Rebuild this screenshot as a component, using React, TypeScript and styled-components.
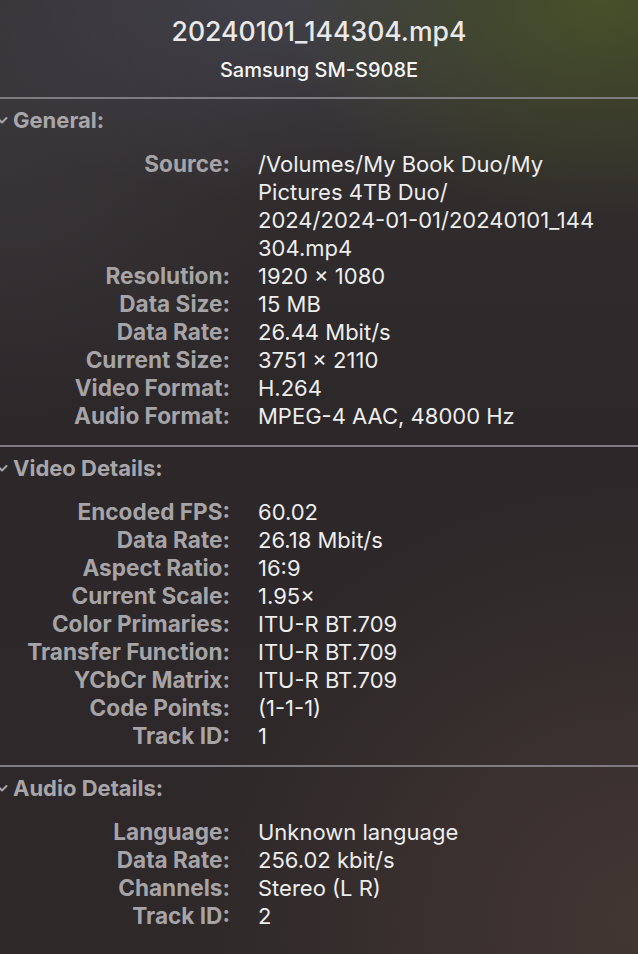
import { Fragment } from 'react';
import styled, { createGlobalStyle } from 'styled-components';

const GlobalStyle = createGlobalStyle`
  html, body {
    margin: 0;
    padding: 0;
    background: #2f2a2c;
  }
  body {
    font-family: Inter, "Liberation Sans", sans-serif;
    -webkit-font-smoothing: antialiased;
  }
`;

const Panel = styled.div`
  width: 638px;
  height: 954px;
  overflow: hidden;
  /* translucent inspector window over a blurry desktop */
  background:
    radial-gradient(ellipse 320px 220px at 600px 0px, rgba(74, 86, 40, 0.85) 0%, transparent 100%),
    radial-gradient(ellipse 360px 200px at 280px 0px, rgba(70, 70, 84, 0.7) 0%, transparent 100%),
    radial-gradient(ellipse 460px 440px at 640px 920px, rgba(78, 62, 56, 0.65) 0%, transparent 100%),
    radial-gradient(ellipse 300px 300px at 0px 120px, rgba(62, 60, 66, 0.6) 0%, transparent 100%),
    linear-gradient(180deg, #34302f 0%, #2c2729 45%, #2e2829 100%);
`;

const Header = styled.div`
  display: flex;
  flex-direction: column;
  align-items: center;
  padding: 16px 0 15px;
`;

const Title = styled.div`
  font-size: 26.6px;
  font-weight: 500;
  line-height: 30px;
  color: #e9e9ea;
`;

const Subtitle = styled.div`
  margin-top: 12px;
  font-size: 20px;
  font-weight: 500;
  line-height: 24px;
  color: #f6f6f6;
`;

const Divider = styled.div`
  height: 2px;
  background: #7e7c80;
`;

const Section = styled.section`
  padding: 7px 0 15px;
`;

const SectionHeader = styled.div`
  display: flex;
  align-items: center;
  gap: 4px;
  height: 28px;
  font-size: 22px;
  font-weight: 700;
  color: #a8a6a9;
`;

const Chevron = styled.svg`
  width: 14px;
  height: 14px;
  margin-left: -5px;
  flex: none;
`;

const Rows = styled.div`
  display: grid;
  grid-template-columns: 230px 340px;
  column-gap: 28px;
  margin-top: 16px;
  font-size: 22px;
  line-height: 28px;
`;

const Label = styled.div`
  text-align: right;
  font-weight: 700;
  font-size: 22.6px;
  color: #a6a4a7;
  white-space: nowrap;
`;

const Value = styled.div`
  color: #ededee;
  font-weight: 400;
  white-space: nowrap;
`;

const PathValue = styled(Value)`
  white-space: normal;
`;

const PathTail = styled.span`
  word-break: break-all;
`;

type Row = [string, React.ReactNode];

const general: Row[] = [
  [
    'Source:',
    <PathValue>
      /Volumes/My Book Duo/My Pictures 4TB Duo/
      <br />
      <PathTail>2024/2024-01-01/20240101_144304.mp4</PathTail>
    </PathValue>,
  ],
  ['Resolution:', '1920 × 1080'],
  ['Data Size:', '15 MB'],
  ['Data Rate:', '26.44 Mbit/s'],
  ['Current Size:', '3751 × 2110'],
  ['Video Format:', 'H.264'],
  ['Audio Format:', 'MPEG-4 AAC, 48000 Hz'],
];

const video: Row[] = [
  ['Encoded FPS:', '60.02'],
  ['Data Rate:', '26.18 Mbit/s'],
  ['Aspect Ratio:', '16:9'],
  ['Current Scale:', '1.95×'],
  ['Color Primaries:', 'ITU-R BT.709'],
  ['Transfer Function:', 'ITU-R BT.709'],
  ['YCbCr Matrix:', 'ITU-R BT.709'],
  ['Code Points:', '(1-1-1)'],
  ['Track ID:', '1'],
];

const audio: Row[] = [
  ['Language:', 'Unknown language'],
  ['Data Rate:', '256.02 kbit/s'],
  ['Channels:', 'Stereo (L R)'],
  ['Track ID:', '2'],
];

function InfoSection({ title, rows }: { title: string; rows: Row[] }) {
  return (
    <Section>
      <SectionHeader>
        <Chevron viewBox="0 0 14 14">
          <path d="M2.5 5 L7 9.5 L11.5 5" fill="none" stroke="#a8a6a9" strokeWidth="2" strokeLinecap="round" strokeLinejoin="round" />
        </Chevron>
        {title}
      </SectionHeader>
      <Rows>
        {rows.map(([label, value], i) => (
          <Fragment key={i}>
            <Label>{label}</Label>
            {typeof value === 'string' ? <Value>{value}</Value> : value}
          </Fragment>
        ))}
      </Rows>
    </Section>
  );
}

export default function App() {
  return (
    <>
      <GlobalStyle />
      <Panel>
        <Header>
          <Title>20240101_144304.mp4</Title>
          <Subtitle>Samsung SM-S908E</Subtitle>
        </Header>
        <Divider />
        <InfoSection title="General:" rows={general} />
        <Divider />
        <InfoSection title="Video Details:" rows={video} />
        <Divider />
        <InfoSection title="Audio Details:" rows={audio} />
      </Panel>
    </>
  );
}
